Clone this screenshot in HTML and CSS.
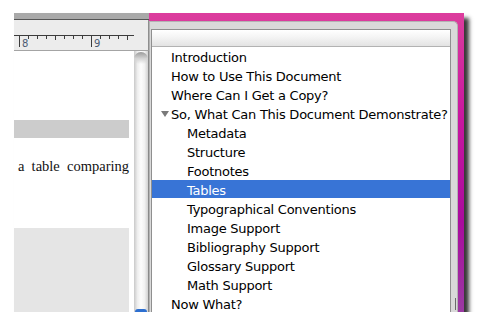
FILE: index.html
```html
<!DOCTYPE html>
<html>
<head>
<meta http-equiv="Content-Type" content="text/html;charset=utf-8">
<title>Document Outline</title>
<link rel="stylesheet" href="styles.css">
</head>
<body>
<div class="shot">
  <div class="doc-pane">
    <div class="titlebar"></div>
    <div class="ruler">
      <svg width="134" height="30" viewBox="0 0 134 30">
        <line x1="0" y1="15.5" x2="120" y2="15.5" stroke="#3c3c3c" stroke-width="1"/>
        <g stroke="#3c3c3c" stroke-width="1">
          <line x1="5.5" y1="15" x2="5.5" y2="27"/>
          <line x1="77.5" y1="15" x2="77.5" y2="27"/>
          <line x1="14.5" y1="15" x2="14.5" y2="19"/>
          <line x1="23.5" y1="15" x2="23.5" y2="19"/>
          <line x1="32.5" y1="15" x2="32.5" y2="19"/>
          <line x1="41.5" y1="15" x2="41.5" y2="20"/>
          <line x1="50.5" y1="15" x2="50.5" y2="19"/>
          <line x1="59.5" y1="15" x2="59.5" y2="19"/>
          <line x1="68.5" y1="15" x2="68.5" y2="19"/>
          <line x1="86.5" y1="15" x2="86.5" y2="19"/>
          <line x1="95.5" y1="15" x2="95.5" y2="19"/>
          <line x1="104.5" y1="15" x2="104.5" y2="19"/>
          <line x1="113.5" y1="15" x2="113.5" y2="20"/>
        </g>
        <text x="8" y="27" class="ruler-num">8</text>
        <text x="80" y="27" class="ruler-num">9</text>
      </svg>
    </div>
    <div class="doc-body">
      <div class="page">
        <div class="shade"></div>
        <p class="para">a table comparing</p>
        <div class="figure"></div>
      </div>
      <div class="vscroll"><span class="thumb"></span></div>
    </div>
  </div>
  <div class="drawer">
    <div class="drawer-frame">
      <div class="outline">
        <div class="outline-head"></div>
        <ul class="toc">
          <li class="lvl0">Introduction</li>
          <li class="lvl0">How to Use This Document</li>
          <li class="lvl0">Where Can I Get a Copy?</li>
          <li class="lvl0 open"><span class="disclosure"></span>So, What Can This Document Demonstrate?</li>
          <li class="lvl1">Metadata</li>
          <li class="lvl1">Structure</li>
          <li class="lvl1">Footnotes</li>
          <li class="lvl1 selected">Tables</li>
          <li class="lvl1">Typographical Conventions</li>
          <li class="lvl1">Image Support</li>
          <li class="lvl1">Bibliography Support</li>
          <li class="lvl1">Glossary Support</li>
          <li class="lvl1">Math Support</li>
          <li class="lvl0">Now What?</li>
        </ul>
      </div>
      <span class="grip"></span>
    </div>
  </div>
</div>
</body>
</html>
```

FILE: styles.css
```css
body {
    margin: 0;
    background: #fff;
}

.shot {
    display: flex;
    width: 450px;
    height: 299px;
    margin: 13px 0 0 14px;
    overflow: hidden;
    box-shadow: 5px 5px 4px rgba(0, 0, 0, 0.78);
}

/* left: the document window */
.doc-pane {
    width: 135px;
    display: flex;
    flex-direction: column;
    background: #fff;
}
.titlebar {
    height: 6px;
    background: #a9a9a9;
    border-bottom: 1px solid #555;
}
.ruler {
    height: 30px;
    background: #ececec;
    border-bottom: 1px solid #a4a4a4;
    border-right: 1px solid #8e8e8e;
}
.ruler svg {
    display: block;
}
.ruler-num {
    font-family: "DejaVu Sans", sans-serif;
    font-size: 10px;
    fill: #4b5a72;
}
.doc-body {
    flex: 1;
    display: flex;
}
.page {
    width: 120px;
    display: flex;
    flex-direction: column;
}
.shade {
    width: 115px;
    height: 18px;
    margin-top: 69px;
    background: #cccccc;
}
.para {
    margin: 20px 0 0;
    padding-left: 4px;
    width: 111px;
    font-family: "Liberation Serif", serif;
    font-size: 14.5px;
    line-height: 17px;
    color: #111;
    text-align: justify;
    text-align-last: justify;
}
.figure {
    width: 115px;
    flex: 1;
    margin-top: 53px;
    background: #e5e5e5;
}
.vscroll {
    width: 14px;
    display: flex;
    flex-direction: column;
    justify-content: flex-end;
    position: relative;
    background: linear-gradient(to right, #c9c9c9 0, #eeeeee 25%, #fdfdfd 50%, #f2f2f2 75%, #d2d2d2 100%);
    border-right: 1px solid #8a8a8a;
}
.vscroll::before {
    content: "";
    position: absolute;
    top: 1px;
    left: 0;
    right: 0;
    height: 12px;
    border-radius: 7px 7px 0 0;
    background: linear-gradient(to bottom, #9a9a9a, #d4d4d4 55%, rgba(255, 255, 255, 0));
}
.thumb {
    display: block;
    height: 3px;
    margin: 0 1px;
    border-radius: 6px 6px 0 0;
    background: #2d6fd0;
}

/* right: the outline drawer */
.drawer {
    flex: 1;
    display: flex;
    padding: 8px 6px 0 0;
    background: linear-gradient(to bottom, #dc3d9d 0, #c8179f 35%, #a90c9d 70%, #9a3aa2 100%);
}
.drawer-frame {
    flex: 1;
    position: relative;
    padding: 7px 6px 0 1px;
    border: 1px solid #b3b3b3;
    border-bottom: none;
    border-radius: 0 5px 0 0;
    background: #d9d9d9;
}
.outline {
    height: 300px;
    background: #fff;
    border: 1px solid #8f8f8f;
}
.outline-head {
    height: 16px;
    border-bottom: 1px solid #b2b2b2;
    background: linear-gradient(to bottom, #ffffff, #f4f4f4 45%, #e3e3e3);
}
.toc {
    list-style: none;
    margin: 0;
    padding: 0;
    font-family: "DejaVu Sans", sans-serif;
    font-size: 13px;
    letter-spacing: -0.25px;
    color: #000;
}
.toc li {
    position: relative;
    height: 15px;
    padding-top: 3px;
    margin-bottom: 1px;
    line-height: 15px;
    white-space: nowrap;
}
.lvl0 {
    padding-left: 19px;
}
.lvl1 {
    padding-left: 35px;
}
.toc .selected {
    background: #3874d6;
    color: #fff;
}
.disclosure {
    position: absolute;
    left: 9px;
    top: 7px;
    width: 0;
    height: 0;
    border-left: 4px solid transparent;
    border-right: 4px solid transparent;
    border-top: 6px solid #7a7a7a;
}
.grip {
    position: absolute;
    right: 1px;
    bottom: 2px;
    width: 1px;
    height: 12px;
    background: #6a6a6a;
}
```
